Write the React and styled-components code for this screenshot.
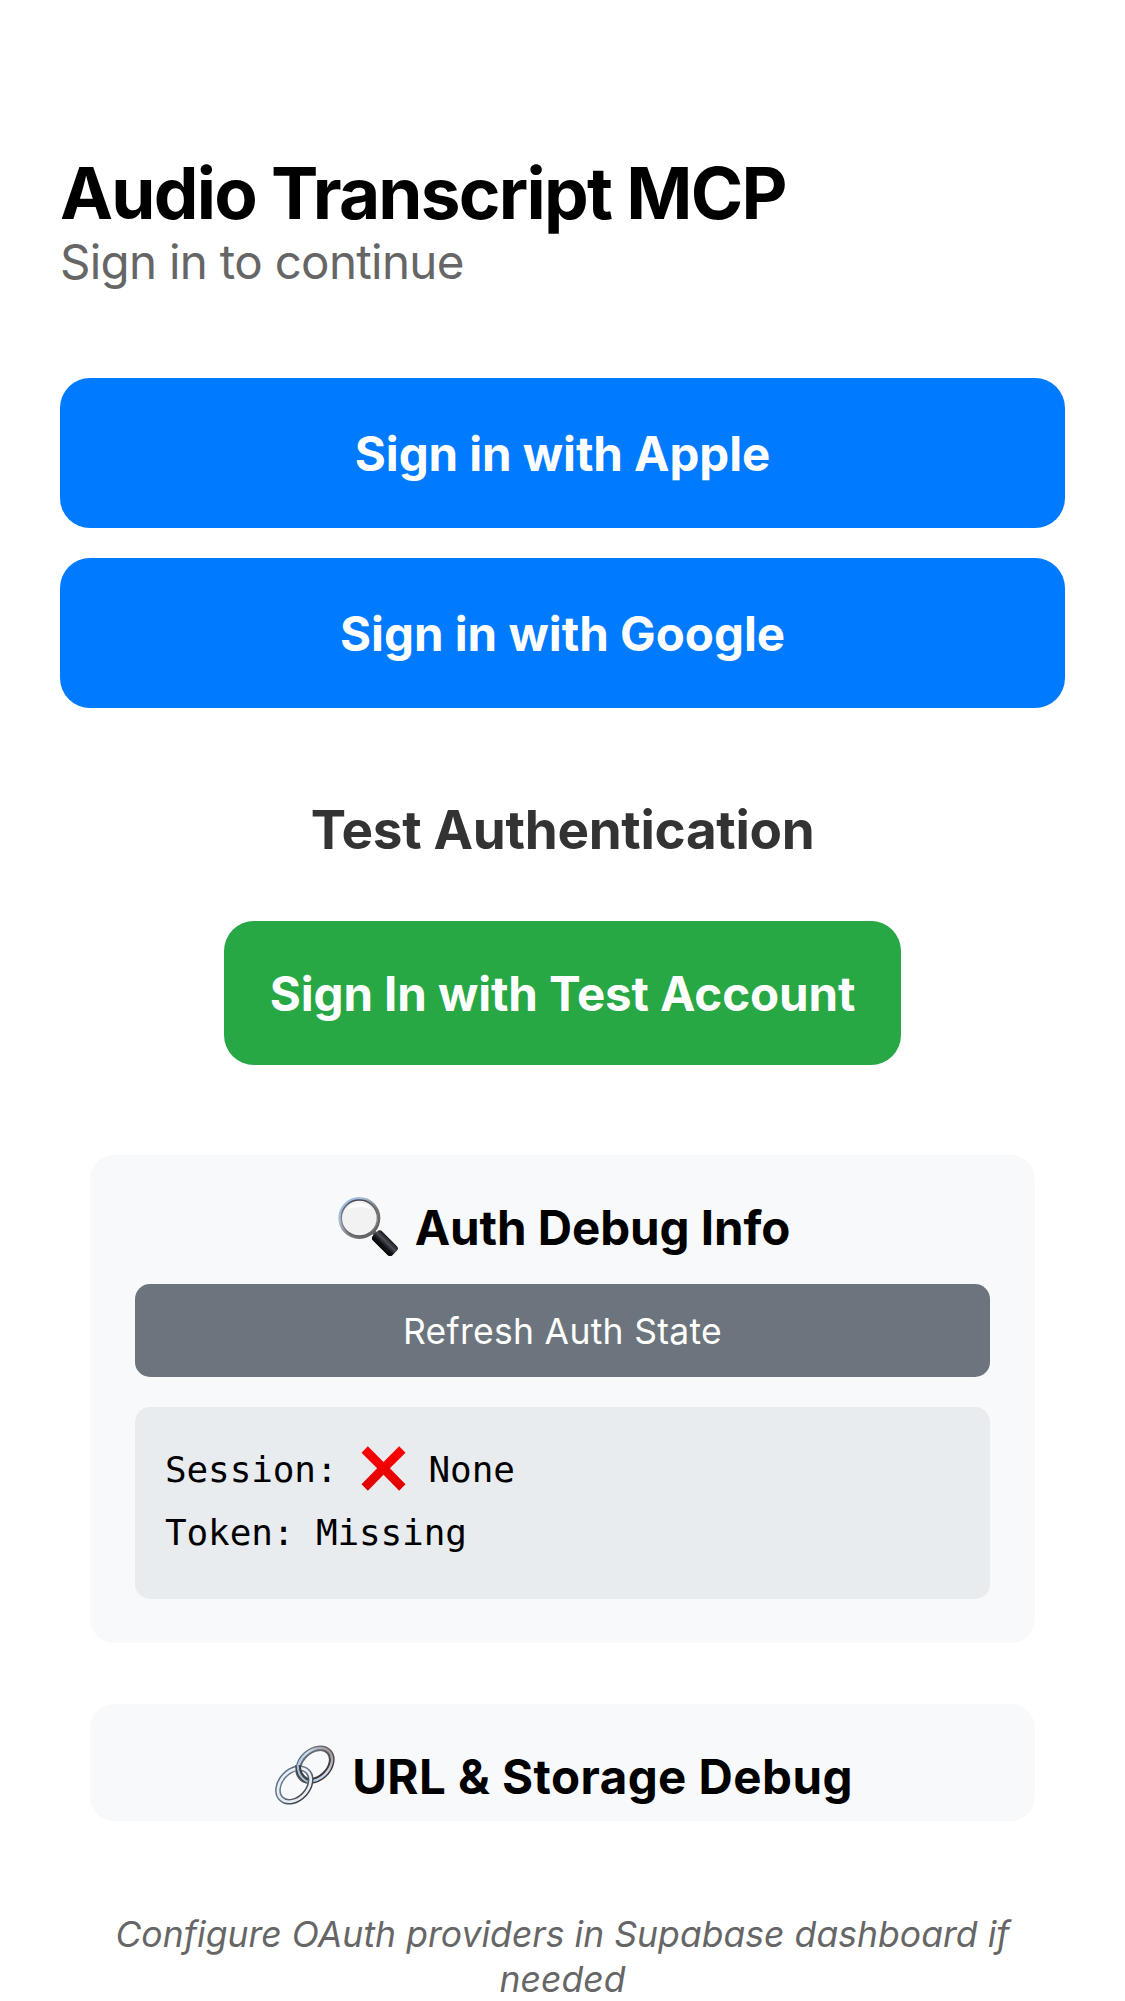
import React from "react";
import styled, { createGlobalStyle } from "styled-components";

const GlobalStyle = createGlobalStyle`
  *, *::before, *::after { box-sizing: border-box; }
  body {
    margin: 0;
    background: #fff;
    color: #000;
    font-family: Inter, "Liberation Sans", sans-serif;
    overflow: hidden;
  }
  h1, h2, h3, p { margin: 0; }
  button {
    border: 0;
    font: inherit;
    cursor: pointer;
  }
`;

const Screen = styled.main`
  display: flex;
  flex-direction: column;
  height: 2001px;
  padding: 152px 60px 0;
  overflow: hidden;
`;

const Header = styled.header`
  display: flex;
  flex-direction: column;
  margin-bottom: 89px;
`;

const Title = styled.h1`
  font-size: 71px;
  font-weight: 700;
  line-height: 82px;
  letter-spacing: -1.75px;
`;

const Subtitle = styled.p`
  color: #666;
  font-size: 47.5px;
  line-height: 55px;
  letter-spacing: -0.7px;
`;

const Providers = styled.div`
  display: flex;
  flex-direction: column;
  gap: 30px;
`;

const ProviderButton = styled.button`
  height: 150px;
  border-radius: 30px;
  background: #007aff;
  color: #fff;
  font-size: 47.5px;
  font-weight: 700;
  letter-spacing: ${({ $tracking }) => $tracking};
`;

const TestSection = styled.section`
  display: flex;
  flex-direction: column;
  align-items: center;
  margin: 90px 0;
`;

const SectionTitle = styled.h2`
  color: #333;
  font-size: 53px;
  font-weight: 700;
  line-height: 64px;
  letter-spacing: -0.31px;
`;

const TestButton = styled.button`
  width: 677px;
  height: 144px;
  margin-top: 59px;
  padding: 0;
  border-radius: 30px;
  background: #28a745;
  color: #fff;
  font-size: 47.5px;
  font-weight: 700;
  letter-spacing: -0.1px;
`;

const Cards = styled.div`
  display: flex;
  flex-direction: column;
  gap: 61px;
  padding: 0 30px;
`;

const Card = styled.section`
  display: flex;
  flex-direction: column;
  height: ${({ $height }) => $height};
  padding: 45px 45px 0;
  border-radius: 24px;
  background: #f8f9fb;
`;

const CardTitle = styled.h3`
  display: flex;
  align-items: center;
  justify-content: center;
  gap: 17px;
  height: 55px;
  padding-left: 3px;
  font-size: 47.5px;
  font-weight: 700;
  line-height: 55px;
  letter-spacing: ${({ $tracking }) => $tracking};
  white-space: nowrap;
`;

const Emoji = styled.svg`
  flex: none;
  width: ${({ $size }) => $size};
  height: ${({ $size }) => $size};
  margin: ${({ $margin }) => $margin || "-3px 0 0"};
`;

const RefreshButton = styled.button`
  height: 93px;
  margin-top: 29px;
  padding: 2px 0 0;
  border-radius: 15px;
  background: #6c757d;
  color: #fff;
  font-size: 35.5px;
  letter-spacing: 0.29px;
`;

const CodeBox = styled.div`
  height: 192px;
  margin-top: 30px;
  padding: 31px 30px 0;
  border-radius: 15px;
  background: #e9ecef;
  font-family: "DejaVu Sans Mono", monospace;
  font-size: 36px;
  letter-spacing: -0.12px;
`;

const CodeLine = styled.div`
  display: flex;
  align-items: center;
  height: 63px;
  line-height: 63px;
  white-space: pre;
`;

const Note = styled.p`
  margin-top: 91px;
  padding: 0 30px;
  color: #666;
  font-size: 35.5px;
  font-style: italic;
  line-height: 45px;
  letter-spacing: 0.04px;
  text-align: center;
`;

function MagnifierIcon() {
  return (
    <Emoji $size="60px" viewBox="54 49 180 180" aria-hidden="true">
      <defs>
        <linearGradient id="rim" x1="0" y1="0" x2="1" y2="1">
          <stop offset="0" stopColor="#8fb9ee" />
          <stop offset="0.3" stopColor="#a9bdd6" />
          <stop offset="0.6" stopColor="#777779" />
          <stop offset="1" stopColor="#555" />
        </linearGradient>
        <linearGradient id="bezel" x1="0" y1="0" x2="0" y2="1">
          <stop offset="0" stopColor="#44474d" />
          <stop offset="0.6" stopColor="#8b8787" />
          <stop offset="1" stopColor="#55575a" />
        </linearGradient>
        <linearGradient id="grip" x1="0" y1="0" x2="0" y2="1">
          <stop offset="0" stopColor="#15171b" />
          <stop offset="0.35" stopColor="#4a4f57" />
          <stop offset="0.65" stopColor="#14161a" />
          <stop offset="1" stopColor="#000" />
        </linearGradient>
      </defs>
      <path d="M156 153l12 12" stroke="#55585c" strokeWidth="14" />
      <circle cx="118" cy="115" r="59" fill="#f2f2f3" stroke="url(#rim)" strokeWidth="8" />
      <circle cx="118" cy="115" r="54" fill="none" stroke="url(#bezel)" strokeWidth="4" />
      <path d="M82 88a45 45 0 0 1 72 0q-36-12-72 0z" fill="#fff" />
      <g transform="rotate(45 194 191)">
        <rect x="153" y="171" width="83" height="39" rx="11" fill="url(#grip)" />
      </g>
    </Emoji>
  );
}

function LinkIcon() {
  return (
    <Emoji $size="60px" viewBox="32 48 180 180" aria-hidden="true">
      <defs>
        <linearGradient id="steelUpper" x1="0" y1="0" x2="0" y2="1">
          <stop offset="0" stopColor="#66717e" />
          <stop offset="0.5" stopColor="#5c5558" />
          <stop offset="1" stopColor="#3b3033" />
        </linearGradient>
        <linearGradient id="steelLower" x1="0" y1="0" x2="0" y2="1">
          <stop offset="0" stopColor="#5f7288" />
          <stop offset="0.5" stopColor="#6d7b8a" />
          <stop offset="1" stopColor="#3e3f43" />
        </linearGradient>
        <linearGradient id="shine" gradientUnits="userSpaceOnUse" x1="95" y1="107" x2="210" y2="107">
          <stop offset="0" stopColor="#a9cdf3" />
          <stop offset="0.6" stopColor="#cddbe9" />
          <stop offset="1" stopColor="#a09ca2" />
        </linearGradient>
      </defs>
      <g fill="none">
        <g transform="rotate(-43 152 107)">
          <ellipse cx="152" cy="107" rx="57" ry="41" stroke="url(#steelUpper)" strokeWidth="17" />
          <ellipse cx="152" cy="107" rx="58" ry="42" stroke="url(#shine)" strokeWidth="7" />
        </g>
        <g transform="rotate(-47 90 168)">
          <ellipse cx="90" cy="168" rx="57" ry="41" stroke="url(#steelLower)" strokeWidth="17" />
          <ellipse cx="90" cy="168" rx="57" ry="41" stroke="#e8eef5" strokeWidth="8" />
        </g>
        <path d="M101 108c0 20 8 38 28 48" stroke="#3d4249" strokeWidth="17" />
        <path d="M100 107c0 22 8 40 28 51" stroke="#a9bdd3" strokeWidth="6" />
      </g>
    </Emoji>
  );
}

function CrossIcon() {
  return (
    <Emoji $size="45px" $margin="-2px 1px 0 2px" viewBox="33.5 48 135 135" aria-hidden="true">
      <defs>
        <linearGradient id="red" x1="0" y1="0" x2="0" y2="1">
          <stop offset="0" stopColor="#ff0000" />
          <stop offset="1" stopColor="#df0000" />
        </linearGradient>
      </defs>
      <path
        d="M54 49L101 96L148 49L167 68L120 115L167 163L148 182L101 134L54 182L35 163L82 115L35 68Z"
        fill="url(#red)"
      />
    </Emoji>
  );
}

export default function App() {
  return (
    <>
      <GlobalStyle />
      <Screen>
        <Header>
          <Title>Audio Transcript MCP</Title>
          <Subtitle>Sign in to continue</Subtitle>
        </Header>
        <Providers>
          <ProviderButton $tracking="-0.07px">Sign in with Apple</ProviderButton>
          <ProviderButton $tracking="0px">Sign in with Google</ProviderButton>
        </Providers>
        <TestSection>
          <SectionTitle>Test Authentication</SectionTitle>
          <TestButton>Sign In with Test Account</TestButton>
        </TestSection>
        <Cards>
          <Card $height="488px">
            <CardTitle $tracking="-0.07px">
              <MagnifierIcon />
              <span>Auth Debug Info</span>
            </CardTitle>
            <RefreshButton>Refresh Auth State</RefreshButton>
            <CodeBox>
              <CodeLine>
                <span>{"Session: "}</span>
                <CrossIcon />
                <span>{" None"}</span>
              </CodeLine>
              <CodeLine>Token: Missing</CodeLine>
            </CodeBox>
          </Card>
          <Card $height="117px">
            <CardTitle $tracking="0.44px">
              <LinkIcon />
              <span>URL &amp; Storage Debug</span>
            </CardTitle>
          </Card>
        </Cards>
        <Note>Configure OAuth providers in Supabase dashboard if needed</Note>
      </Screen>
    </>
  );
}
